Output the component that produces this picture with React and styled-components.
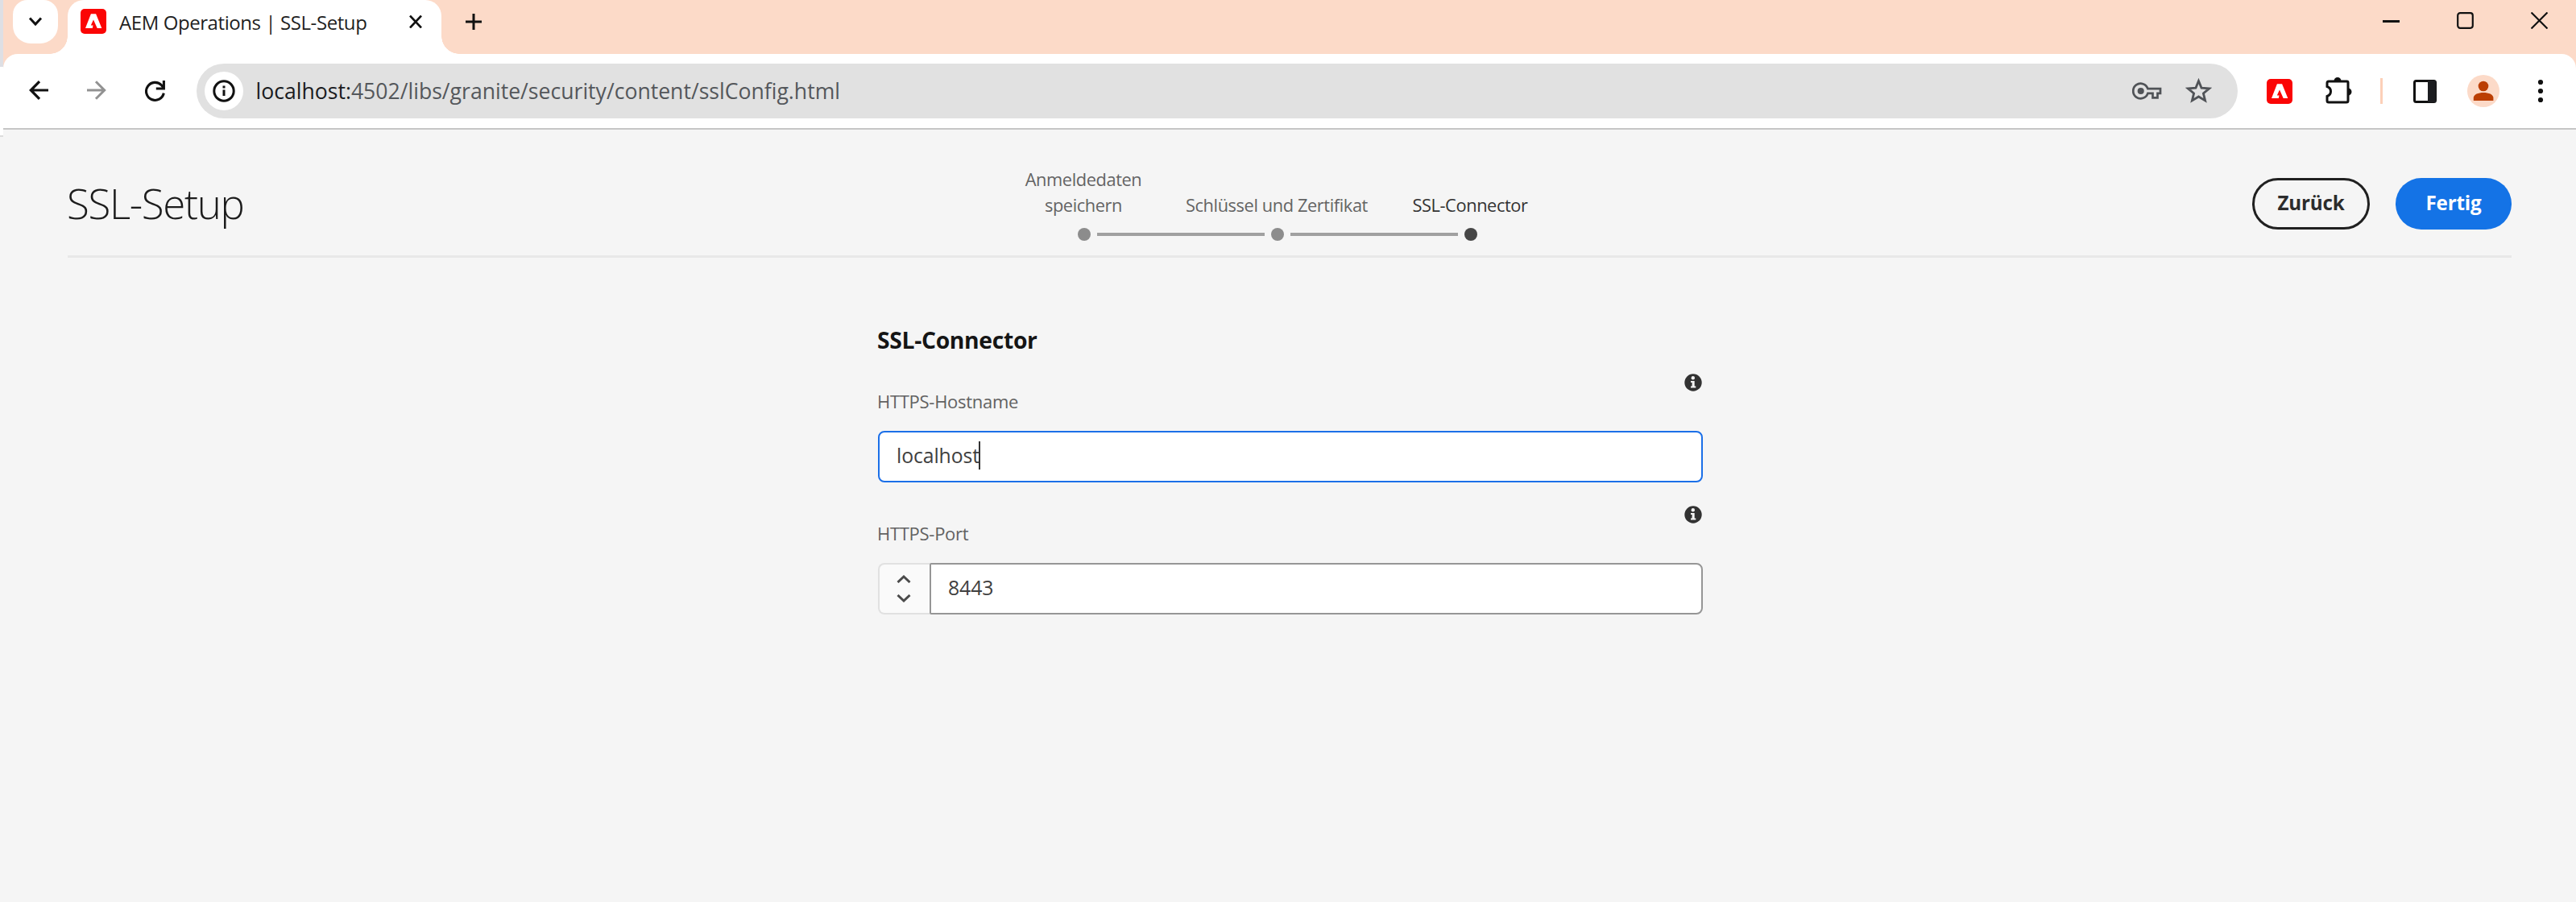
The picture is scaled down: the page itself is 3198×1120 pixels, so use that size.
import React from 'react';
import styled, { createGlobalStyle } from 'styled-components';

const GlobalStyle = createGlobalStyle`
  *, *::before, *::after { box-sizing: border-box; }
  body { margin: 0; background: #f5f5f5; font-family: "Open Sans", "Noto Sans", sans-serif; }
`;

const Window = styled.div`
  display: flex;
  height: 1120px;
  overflow: hidden;
`;
const WindowEdge = styled.div`
  width: 4px;
  height: 170px;
  border-bottom: 2px solid #dcdcdc;
  background: linear-gradient(#dedfe4 83px, #fff 83px);
`;
const Main = styled.div`
  flex: 1;
  min-width: 0;
`;

/* browser frame */
const Chrome = styled.header`
  background: #fcdac8;
`;
const TabStrip = styled.div`
  display: flex;
  height: 67px;
  padding-left: 12px;
`;
const TabSearch = styled.div`
  display: grid;
  place-items: center;
  width: 56px;
  height: 54px;
  border-radius: 18px 18px 22px 22px;
  background: #fff;
`;
const Tab = styled.div`
  position: relative;
  display: flex;
  width: 464px;
  height: 67px;
  margin-left: 12px;
  padding: 0 24px 14px 16px;
  align-items: center;
  border-radius: 20px 20px 0 0;
  background: #fff;
  &::before, &::after {
    content: "";
    position: absolute;
    bottom: 0;
    width: 22px;
    height: 22px;
  }
  &::before {
    right: 100%;
    background: radial-gradient(circle at 0 0, transparent 21.5px, #fff 22px);
  }
  &::after {
    left: 100%;
    background: radial-gradient(circle at 100% 0, transparent 21.5px, #fff 22px);
  }
`;
const TabTitle = styled.span`
  flex: 1;
  margin-left: 16px;
  padding-top: 2px;
  font-size: 24px;
  letter-spacing: -0.42px;
  color: #1f1f1f;
  white-space: nowrap;
`;
const NewTab = styled.div`
  display: flex;
  align-items: center;
  margin-left: 30px;
  padding-bottom: 13px;
`;
const WindowControls = styled.div`
  display: flex;
  gap: 71px;
  align-items: center;
  margin-left: auto;
  padding: 0 35px 17px 0;
`;
const Toolbar = styled.div`
  display: flex;
  align-items: center;
  height: 94px;
  padding-left: 32px;
  border-bottom: 2px solid #c6c6c6;
  border-radius: 18px 18px 0 0;
  background: #fff;
`;
const Navigation = styled.div`
  display: flex;
  gap: 48px;
`;
const AddressBar = styled.div`
  display: flex;
  align-items: center;
  width: 2534px;
  height: 68px;
  margin-left: 39px;
  padding: 0 32px 0 10px;
  border-radius: 34px;
  background: #e1e1e1;
`;
const SiteInfo = styled.div`
  display: grid;
  place-items: center;
  width: 48px;
  height: 48px;
  border-radius: 50%;
  background: #fff;
`;
const Url = styled.span`
  flex: 1;
  margin-left: 15.5px;
  font-size: 26.6px;
  color: #54575b;
  white-space: nowrap;
`;
const Host = styled.span`
  color: #1a1b1e;
`;
const AddressActions = styled.div`
  display: flex;
  align-items: center;
  gap: 29px;
`;
const Extensions = styled.div`
  display: flex;
  align-items: center;
  gap: 38px;
  margin-left: 36px;
`;
const ExtensionsMenu = styled.div`
  padding-left: 3px;
`;
const Divider = styled.div`
  width: 3px;
  height: 32px;
  margin-left: -4px;
  background: #fcd0b8;
`;
const Avatar = styled.div`
  width: 40px;
  height: 40px;
  border-radius: 50%;
  background: #fcdac8;
`;
const Icon = styled.svg`
  display: block;
  flex: none;
  fill: none;
  stroke: ${(p) => p.$color ?? '#111'};
  stroke-width: ${(p) => p.$weight ?? 3};
`;

/* wizard header */
const WizardHeader = styled.div`
  display: grid;
  grid-template-columns: 1142px 720px 1fr;
  height: 159px;
  margin: 0 80px;
  border-bottom: 3px solid #e8e8e8;
`;
const Title = styled.h1`
  margin: 60px 0 0 -1px;
  font-size: 51px;
  font-weight: 300;
  letter-spacing: -1.35px;
  line-height: 62px;
  color: #1c1c1c;
`;
const Steps = styled.ol`
  display: grid;
  grid-template-columns: repeat(3, 240px);
  align-items: end;
  margin: 0;
  padding: 0 0 18px;
  list-style: none;
`;
const Step = styled.li`
  display: flex;
  flex-direction: column;
  gap: 12px;
  color: ${(p) => (p.$current ? '#333' : '#646464')};
`;
const StepLabel = styled.span`
  padding: 0 5px 0 3px;
  font-size: 21.8px;
  letter-spacing: -0.4px;
  line-height: 32px;
  text-align: center;
`;
const StepTrack = styled.div`
  display: flex;
  align-items: center;
  gap: 8px;
`;
const Dot = styled.span`
  width: 16px;
  height: 16px;
  border-radius: 50%;
  background: ${(p) => (p.$current ? '#464646' : '#8c8c8c')};
`;
const Line = styled.span`
  flex: 1;
  height: 4px;
  background: ${(p) => (p.$hidden ? 'transparent' : '#a0a0a0')};
`;
const Actions = styled.div`
  display: flex;
  justify-content: flex-end;
  gap: 32px;
  padding-top: 60px;
`;
const Button = styled.button`
  width: ${(p) => (p.$primary ? 144 : 146)}px;
  height: 64px;
  padding: 0 0 3px;
  border: ${(p) => (p.$primary ? '0' : '3px solid #202020')};
  border-radius: 32px;
  background: ${(p) => (p.$primary ? '#1473e6' : 'transparent')};
  font: 700 24.2px "Open Sans", sans-serif;
  letter-spacing: -0.2px;
  color: ${(p) => (p.$primary ? '#fff' : '#2c2c2c')};
`;

/* form */
const Form = styled.form`
  width: 1024px;
  margin: 82px 0 0 1086px;
`;
const FormTitle = styled.h2`
  margin: 0 0 22px -1px;
  font-size: 28.3px;
  font-weight: 700;
  letter-spacing: -0.33px;
  line-height: 40px;
  color: #151515;
`;
const Field = styled.div`
  display: flex;
  flex-direction: column;
  margin-bottom: 29px;
`;
const Hint = styled.div`
  align-self: flex-end;
  margin-right: 1px;
`;
const Label = styled.label`
  margin: 0 0 25px -1px;
  font-size: 22px;
  letter-spacing: -0.28px;
  line-height: 24px;
  color: #626262;
`;
const Control = styled.div`
  display: flex;
  height: 64px;
`;
const TextBox = styled.div`
  display: flex;
  flex: 1;
  align-items: center;
  padding: 0 21px 4px;
  border: 2px solid ${(p) => (p.$focused ? '#1b6fe8' : '#969696')};
  border-radius: ${(p) => (p.$joined ? '2px 8px 8px 2px' : '8px')};
  background: #fff;
  font-size: 24.8px;
  letter-spacing: -0.1px;
  color: #404040;
`;
const Caret = styled.span`
  width: 2px;
  height: 35px;
  margin-left: -1px;
  background: #333;
`;
const Stepper = styled.div`
  display: flex;
  flex-direction: column;
  align-items: center;
  justify-content: center;
  gap: 14px;
  width: 64px;
  padding-right: 2px;
  border: 2px solid #e1e1e1;
  border-right: 0;
  border-radius: 8px 0 0 8px;
  background: #fafafa;
`;

const AdobeIcon = () => (
  <Icon width="32" height="31" viewBox="0 0 32 31" $weight={0}>
    <rect width="32" height="31" rx="5" fill="#fb0505" />
    <path d="M6 24 12.9 6.3h6.2L26.3 24h-5.6L16 13.4l-3.2 7h2.7L14.8 24Z" fill="#fff" />
  </Icon>
);

const InfoIcon = () => (
  <Icon width="22" height="22" viewBox="0 0 22 22" $weight={0}>
    <circle cx="11" cy="11" r="10.7" fill="#323232" />
    <circle cx="10.8" cy="5.3" r="2.2" fill="#f4f4f4" />
    <path d="M8 9h4.7v6.4h1.6v2H8v-2h1.6v-4.3H8Z" fill="#f4f4f4" />
  </Icon>
);

const steps = ['Anmeldedaten speichern', 'Schlüssel und Zertifikat', 'SSL-Connector'];

function BrowserChrome() {
  return (
    <Chrome>
      <TabStrip>
        <TabSearch>
          <Icon width="18" height="12" viewBox="0 0 18 12"><path d="m2 1.5 7 7.5 7-7.5" /></Icon>
        </TabSearch>
        <Tab>
          <AdobeIcon />
          <TabTitle>AEM Operations | SSL-Setup</TabTitle>
          <Icon width="16" height="16" viewBox="0 0 16 16" $weight={2.6}><path d="m1 .5 14 15m0-15L1 15.5" /></Icon>
        </Tab>
        <NewTab>
          <Icon width="20" height="20" viewBox="0 0 20 20"><path d="M10 0v20M0 10h20" /></Icon>
        </NewTab>
        <WindowControls>
          <Icon width="21" height="21" viewBox="0 0 21 21"><path d="M0 11.5h21" /></Icon>
          <Icon width="21" height="21" viewBox="0 0 21 21" $weight={2.2}><rect x="1.2" y="1.2" width="18.6" height="18.6" rx="3" /></Icon>
          <Icon width="21" height="21" viewBox="0 0 21 21" $weight={2.2}><path d="m.5.5 20 20m0-20-20 20" /></Icon>
        </WindowControls>
      </TabStrip>
      <Toolbar>
        <Navigation>
          <Icon width="24" height="24" viewBox="0 0 24 24" $weight={3.2}><path d="M24 12H2.5M13 1.2 2.3 12 13 22.8" /></Icon>
          <Icon width="24" height="24" viewBox="0 0 24 24" $weight={3} $color="#929292"><path d="M0 12h21.5M11 1.2 21.7 12 11 22.8" /></Icon>
          <Icon width="25" height="26" viewBox="0 0 25 26" $weight={3.1}><path d="M23.3 15.6A11 11 0 1 1 20.5 5.8l2.6 3.4" /><path d="M23.4 0v10H13.8" /></Icon>
        </Navigation>
        <AddressBar>
          <SiteInfo>
            <Icon width="28" height="28" viewBox="0 0 28 28">
              <circle cx="14" cy="14" r="12.2" />
              <path d="M14 12.5V20M14 7.5v3" />
            </Icon>
          </SiteInfo>
          <Url><Host>localhost:</Host>4502/libs/granite/security/content/sslConfig.html</Url>
          <AddressActions>
            <Icon width="37" height="22" viewBox="0 0 37 22" $weight={2.7} $color="#505357">
              <path d="M19.4 8.2A9.3 9.3 0 1 0 19.4 13.8H25.5V19.3H31.5V13.8H35V8.2Z" />
              <circle cx="10.7" cy="11" r="2.7" fill="#505357" />
            </Icon>
            <Icon width="33" height="33" viewBox="0 0 33 33" $weight={2.8} $color="#505357">
              <path d="m16.5 3.5 3.5 8.6 9.6.8-7.2 6 2.2 9-8.1-4.9-8.1 4.9 2.2-9-7.2-6 9.6-.8Z" />
            </Icon>
          </AddressActions>
        </AddressBar>
        <Extensions>
          <AdobeIcon />
          <ExtensionsMenu>
            <Icon width="34" height="34" viewBox="0 0 34 34" $weight={3}>
              <path d="M4 5h22.5q1.5 0 1.5 1.5V29q0 2-2 2H4q-2 0-2-2v-5.5c6-2 6-10 0-12V7q0-2 2-2Z" />
              <path d="M10.5 4.5a4.5 4.5 0 0 1 9 0ZM28 13.5a4.5 4.5 0 0 1 0 9Z" fill="#111" stroke="none" />
            </Icon>
          </ExtensionsMenu>
          <Divider />
          <Icon width="29" height="29" viewBox="0 0 29 29">
            <rect x="1.5" y="1.5" width="26" height="26" rx="2" />
            <path d="M18 1h10v27H18Z" fill="#1c1d20" stroke="none" />
          </Icon>
          <Avatar>
            <Icon width="40" height="40" viewBox="0 0 40 40" $weight={0}>
              <circle cx="20" cy="14" r="6.3" fill="#bb3f04" />
              <path d="M7.8 32v-3.5c0-8.6 24.6-8.6 24.6 0V32Z" fill="#bb3f04" />
            </Icon>
          </Avatar>
          <Icon width="28" height="30" viewBox="0 0 28 30" $weight={0}>
            <g fill="#111"><circle cx="13" cy="4" r="3.1" /><circle cx="13" cy="15" r="3.1" /><circle cx="13" cy="26" r="3.1" /></g>
          </Icon>
        </Extensions>
      </Toolbar>
    </Chrome>
  );
}

export default function App() {
  return (
    <>
      <GlobalStyle />
      <Window>
        <WindowEdge />
        <Main>
          <BrowserChrome />
          <WizardHeader>
            <Title>SSL-Setup</Title>
            <Steps>
              {steps.map((label, i) => {
                const current = i === steps.length - 1;
                return (
                  <Step key={label} $current={current}>
                    <StepLabel>{label}</StepLabel>
                    <StepTrack>
                      <Line $hidden={i === 0} />
                      <Dot $current={current} />
                      <Line $hidden={current} />
                    </StepTrack>
                  </Step>
                );
              })}
            </Steps>
            <Actions>
              <Button type="button">Zurück</Button>
              <Button type="button" $primary>Fertig</Button>
            </Actions>
          </WizardHeader>
          <Form>
            <FormTitle>SSL-Connector</FormTitle>
            <Field>
              <Hint><InfoIcon /></Hint>
              <Label>HTTPS-Hostname</Label>
              <Control>
                <TextBox $focused>localhost<Caret /></TextBox>
              </Control>
            </Field>
            <Field>
              <Hint><InfoIcon /></Hint>
              <Label>HTTPS-Port</Label>
              <Control>
                <Stepper>
                  <Icon width="18" height="10" viewBox="0 0 18 10" $color="#4b4b4b"><path d="m1.5 9 7.5-7 7.5 7" /></Icon>
                  <Icon width="18" height="10" viewBox="0 0 18 10" $color="#4b4b4b"><path d="m1.5 1 7.5 7 7.5-7" /></Icon>
                </Stepper>
                <TextBox $joined>8443</TextBox>
              </Control>
            </Field>
          </Form>
        </Main>
      </Window>
    </>
  );
}
